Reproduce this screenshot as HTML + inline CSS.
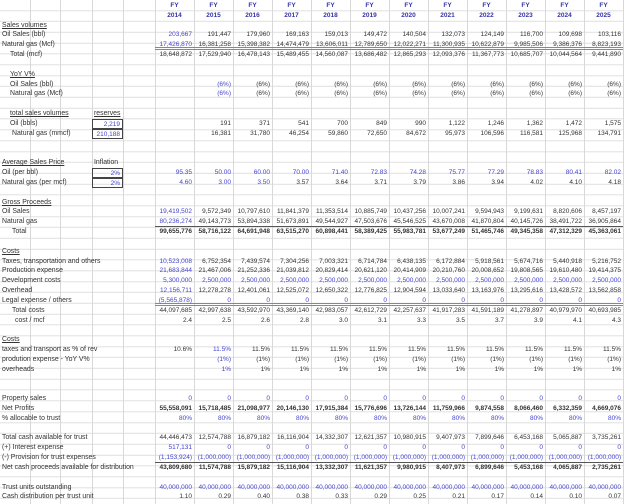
<!DOCTYPE html>
<html><head><meta charset="utf-8"><style>
*{margin:0;padding:0;box-sizing:border-box}
body{width:640px;height:504px;background:#fff;position:relative;overflow:hidden;font-family:"Liberation Sans",sans-serif;font-size:6.5px;color:#333}
#g{position:absolute;left:0;top:0;width:624px;height:504px;
background-image:repeating-linear-gradient(to bottom,transparent 0,transparent 9.84px,#e0e0e0 9.84px,#e0e0e0 10.84px);background-position:0 0.3px}
#gv{position:absolute;left:155px;top:0;width:469px;height:504px;
background-image:linear-gradient(to right,#d8d8d8 1px,transparent 1px);background-size:39px 100%;background-repeat:repeat-x}
.v{position:absolute;top:0;height:504px;width:1px;background:#d8d8d8}
#t{position:absolute;left:0;top:1px;width:640px}
.r{display:flex;height:9.84px;line-height:9.84px;white-space:nowrap}
.l{width:92px;padding-left:2px;overflow:visible;font-size:6.9px}
.m{width:31px;text-align:right;padding-right:2px}
.n{width:32px}
.r i{font-style:normal;width:39px;text-align:right;padding-right:2px}
.b{color:#4444cc}
.h i{text-align:center;font-weight:bold;color:#3535a5;padding-right:0}
.u{text-decoration:underline}
.bo{font-weight:bold}
.d i{border-bottom:3px double #888;}
.s i{border-bottom:1px solid #555}
.x{border:1px solid #444;color:#4444cc}
.ml{text-align:left}
</style></head><body>
<div id="g"></div><div id="gv"></div>
<div class="v" style="left:30px"></div><div class="v" style="left:60px"></div><div class="v" style="left:92px"></div><div class="v" style="left:123px"></div><div class="v" style="left:623px"></div>
<div id="t">
<div class="r h"><span class="l"></span><span class="m"></span><span class="n"></span><i>FY</i><i>FY</i><i>FY</i><i>FY</i><i>FY</i><i>FY</i><i>FY</i><i>FY</i><i>FY</i><i>FY</i><i>FY</i><i>FY</i></div>
<div class="r h"><span class="l"></span><span class="m"></span><span class="n"></span><i>2014</i><i>2015</i><i>2016</i><i>2017</i><i>2018</i><i>2019</i><i>2020</i><i>2021</i><i>2022</i><i>2023</i><i>2024</i><i>2025</i></div>
<div class="r"><span class="l u">Sales volumes</span></div>
<div class="r"><span class="l">Oil Sales (bbl)</span><span class="m"></span><span class="n"></span><i class="b">203,667</i><i>191,447</i><i>179,960</i><i>169,163</i><i>159,013</i><i>149,472</i><i>140,504</i><i>132,073</i><i>124,149</i><i>116,700</i><i>109,698</i><i>103,116</i></div>
<div class="r d"><span class="l">Natural gas (Mcf)</span><span class="m"></span><span class="n"></span><i class="b">17,426,870</i><i>16,381,258</i><i>15,398,382</i><i>14,474,479</i><i>13,606,011</i><i>12,789,650</i><i>12,022,271</i><i>11,300,935</i><i>10,622,879</i><i>9,985,506</i><i>9,386,376</i><i>8,823,193</i></div>
<div class="r"><span class="l" style="padding-left:10px">Total (mcf)</span><span class="m"></span><span class="n"></span><i>18,648,872</i><i>17,529,940</i><i>16,478,143</i><i>15,489,455</i><i>14,560,087</i><i>13,686,482</i><i>12,865,293</i><i>12,093,376</i><i>11,367,773</i><i>10,685,707</i><i>10,044,564</i><i>9,441,890</i></div>
<div class="r"></div>
<div class="r"><span class="l u" style="padding-left:10px">YoY V%</span></div>
<div class="r"><span class="l" style="padding-left:10px">Oil Sales (bbl)</span><span class="m"></span><span class="n"></span><i></i><i class="b">(6%)</i><i>(6%)</i><i>(6%)</i><i>(6%)</i><i>(6%)</i><i>(6%)</i><i>(6%)</i><i>(6%)</i><i>(6%)</i><i>(6%)</i><i>(6%)</i></div>
<div class="r"><span class="l" style="padding-left:10px">Natural gas (Mcf)</span><span class="m"></span><span class="n"></span><i></i><i class="b">(6%)</i><i>(6%)</i><i>(6%)</i><i>(6%)</i><i>(6%)</i><i>(6%)</i><i>(6%)</i><i>(6%)</i><i>(6%)</i><i>(6%)</i><i>(6%)</i></div>
<div class="r"></div>
<div class="r"><span class="l u" style="padding-left:10px">total sales volumes</span><span class="m ml u" style="padding-left:2px;font-size:6.9px">reserves</span></div>
<div class="r"><span class="l" style="padding-left:10px">Oil (bbls)</span><span class="m x">2,219</span><span class="n"></span><i></i><i>191</i><i>371</i><i>541</i><i>700</i><i>849</i><i>990</i><i>1,122</i><i>1,246</i><i>1,362</i><i>1,472</i><i>1,575</i></div>
<div class="r"><span class="l" style="padding-left:12px">Natural gas (mmcf)</span><span class="m x">210,188</span><span class="n"></span><i></i><i>16,381</i><i>31,780</i><i>46,254</i><i>59,860</i><i>72,650</i><i>84,672</i><i>95,973</i><i>106,596</i><i>116,581</i><i>125,968</i><i>134,791</i></div>
<div class="r"></div>
<div class="r"></div>
<div class="r"><span class="l u">Average Sales Price</span><span class="m ml" style="padding-left:2px;font-size:6.9px">Inflation</span></div>
<div class="r"><span class="l">Oil (per bbl)</span><span class="m x">2%</span><span class="n"></span><i class="b">95.35</i><i class="b">50.00</i><i class="b">60.00</i><i class="b">70.00</i><i class="b">71.40</i><i class="b">72.83</i><i class="b">74.28</i><i class="b">75.77</i><i class="b">77.29</i><i class="b">78.83</i><i class="b">80.41</i><i class="b">82.02</i></div>
<div class="r"><span class="l">Natural gas (per mcf)</span><span class="m x">2%</span><span class="n"></span><i class="b">4.60</i><i class="b">3.00</i><i class="b">3.50</i><i>3.57</i><i>3.64</i><i>3.71</i><i>3.79</i><i>3.86</i><i>3.94</i><i>4.02</i><i>4.10</i><i>4.18</i></div>
<div class="r"></div>
<div class="r"><span class="l u">Gross Proceeds</span></div>
<div class="r"><span class="l">Oil Sales</span><span class="m"></span><span class="n"></span><i class="b">19,419,502</i><i>9,572,349</i><i>10,797,610</i><i>11,841,379</i><i>11,353,514</i><i>10,885,749</i><i>10,437,256</i><i>10,007,241</i><i>9,594,943</i><i>9,199,631</i><i>8,820,606</i><i>8,457,197</i></div>
<div class="r s"><span class="l">Natural gas</span><span class="m"></span><span class="n"></span><i class="b">80,236,274</i><i>49,143,773</i><i>53,894,338</i><i>51,673,891</i><i>49,544,927</i><i>47,503,676</i><i>45,546,525</i><i>43,670,008</i><i>41,870,804</i><i>40,145,726</i><i>38,491,722</i><i>36,905,864</i></div>
<div class="r bo"><span class="l" style="padding-left:12px;font-weight:normal">Total</span><span class="m"></span><span class="n"></span><i>99,655,776</i><i>58,716,122</i><i>64,691,948</i><i>63,515,270</i><i>60,898,441</i><i>58,389,425</i><i>55,983,781</i><i>53,677,249</i><i>51,465,746</i><i>49,345,358</i><i>47,312,329</i><i>45,363,061</i></div>
<div class="r"></div>
<div class="r"><span class="l u">Costs</span></div>
<div class="r"><span class="l">Taxes, transportation and others</span><span class="m"></span><span class="n"></span><i class="b">10,523,008</i><i>6,752,354</i><i>7,439,574</i><i>7,304,256</i><i>7,003,321</i><i>6,714,784</i><i>6,438,135</i><i>6,172,884</i><i>5,918,561</i><i>5,674,716</i><i>5,440,918</i><i>5,216,752</i></div>
<div class="r"><span class="l">Production expense</span><span class="m"></span><span class="n"></span><i class="b">21,683,844</i><i>21,467,006</i><i>21,252,336</i><i>21,039,812</i><i>20,829,414</i><i>20,621,120</i><i>20,414,909</i><i>20,210,760</i><i>20,008,652</i><i>19,808,565</i><i>19,610,480</i><i>19,414,375</i></div>
<div class="r"><span class="l">Development costs</span><span class="m"></span><span class="n"></span><i class="b">5,300,000</i><i class="b">2,500,000</i><i class="b">2,500,000</i><i class="b">2,500,000</i><i class="b">2,500,000</i><i class="b">2,500,000</i><i class="b">2,500,000</i><i class="b">2,500,000</i><i class="b">2,500,000</i><i class="b">2,500,000</i><i class="b">2,500,000</i><i class="b">2,500,000</i></div>
<div class="r"><span class="l">Overhead</span><span class="m"></span><span class="n"></span><i class="b">12,156,711</i><i>12,278,278</i><i>12,401,061</i><i>12,525,072</i><i>12,650,322</i><i>12,776,825</i><i>12,904,594</i><i>13,033,640</i><i>13,163,976</i><i>13,295,616</i><i>13,428,572</i><i>13,562,858</i></div>
<div class="r d"><span class="l">Legal expense / others</span><span class="m"></span><span class="n"></span><i class="b">(5,565,878)</i><i class="b">0</i><i class="b">0</i><i class="b">0</i><i class="b">0</i><i class="b">0</i><i class="b">0</i><i class="b">0</i><i class="b">0</i><i class="b">0</i><i class="b">0</i><i class="b">0</i></div>
<div class="r"><span class="l" style="padding-left:12px">Total costs</span><span class="m"></span><span class="n"></span><i>44,097,685</i><i>42,997,638</i><i>43,592,970</i><i>43,369,140</i><i>42,983,057</i><i>42,612,729</i><i>42,257,637</i><i>41,917,283</i><i>41,591,189</i><i>41,278,897</i><i>40,979,970</i><i>40,693,985</i></div>
<div class="r"><span class="l" style="padding-left:15px">cost / mcf</span><span class="m"></span><span class="n"></span><i>2.4</i><i>2.5</i><i>2.6</i><i>2.8</i><i>3.0</i><i>3.1</i><i>3.3</i><i>3.5</i><i>3.7</i><i>3.9</i><i>4.1</i><i>4.3</i></div>
<div class="r"></div>
<div class="r"><span class="l u">Costs</span></div>
<div class="r"><span class="l">taxes and transport as % of rev</span><span class="m"></span><span class="n"></span><i>10.6%</i><i class="b">11.5%</i><i>11.5%</i><i>11.5%</i><i>11.5%</i><i>11.5%</i><i>11.5%</i><i>11.5%</i><i>11.5%</i><i>11.5%</i><i>11.5%</i><i>11.5%</i></div>
<div class="r"><span class="l">prodution expense - YoY V%</span><span class="m"></span><span class="n"></span><i></i><i class="b">(1%)</i><i>(1%)</i><i>(1%)</i><i>(1%)</i><i>(1%)</i><i>(1%)</i><i>(1%)</i><i>(1%)</i><i>(1%)</i><i>(1%)</i><i>(1%)</i></div>
<div class="r"><span class="l">overheads</span><span class="m"></span><span class="n"></span><i></i><i class="b">1%</i><i>1%</i><i>1%</i><i>1%</i><i>1%</i><i>1%</i><i>1%</i><i>1%</i><i>1%</i><i>1%</i><i>1%</i></div>
<div class="r"></div>
<div class="r"></div>
<div class="r"><span class="l">Property sales</span><span class="m"></span><span class="n"></span><i class="b">0</i><i class="b">0</i><i class="b">0</i><i class="b">0</i><i class="b">0</i><i class="b">0</i><i class="b">0</i><i class="b">0</i><i class="b">0</i><i class="b">0</i><i class="b">0</i><i class="b">0</i></div>
<div class="r bo"><span class="l" style="font-weight:normal">Net Profits</span><span class="m"></span><span class="n"></span><i>55,558,091</i><i>15,718,485</i><i>21,098,977</i><i>20,146,130</i><i>17,915,384</i><i>15,776,696</i><i>13,726,144</i><i>11,759,966</i><i>9,874,558</i><i>8,066,460</i><i>6,332,359</i><i>4,669,076</i></div>
<div class="r"><span class="l">% allocable to trust</span><span class="m"></span><span class="n"></span><i class="b">80%</i><i class="b">80%</i><i class="b">80%</i><i class="b">80%</i><i class="b">80%</i><i class="b">80%</i><i class="b">80%</i><i class="b">80%</i><i class="b">80%</i><i class="b">80%</i><i class="b">80%</i><i class="b">80%</i></div>
<div class="r"></div>
<div class="r"><span class="l">Total cash available for trust</span><span class="m"></span><span class="n"></span><i>44,446,473</i><i>12,574,788</i><i>16,879,182</i><i>16,116,904</i><i>14,332,307</i><i>12,621,357</i><i>10,980,915</i><i>9,407,973</i><i>7,899,646</i><i>6,453,168</i><i>5,065,887</i><i>3,735,261</i></div>
<div class="r"><span class="l">(+) Interest expense</span><span class="m"></span><span class="n"></span><i class="b">517,131</i><i class="b">0</i><i class="b">0</i><i class="b">0</i><i class="b">0</i><i class="b">0</i><i class="b">0</i><i class="b">0</i><i class="b">0</i><i class="b">0</i><i class="b">0</i><i class="b">0</i></div>
<div class="r s"><span class="l">(-) Provision for trust expenses</span><span class="m"></span><span class="n"></span><i class="b">(1,153,924)</i><i class="b">(1,000,000)</i><i class="b">(1,000,000)</i><i class="b">(1,000,000)</i><i class="b">(1,000,000)</i><i class="b">(1,000,000)</i><i class="b">(1,000,000)</i><i class="b">(1,000,000)</i><i class="b">(1,000,000)</i><i class="b">(1,000,000)</i><i class="b">(1,000,000)</i><i class="b">(1,000,000)</i></div>
<div class="r bo"><span class="l" style="font-weight:normal">Net cash proceeds available for distribution</span><span class="m"></span><span class="n"></span><i>43,809,680</i><i>11,574,788</i><i>15,879,182</i><i>15,116,904</i><i>13,332,307</i><i>11,621,357</i><i>9,980,915</i><i>8,407,973</i><i>6,899,646</i><i>5,453,168</i><i>4,065,887</i><i>2,735,261</i></div>
<div class="r"></div>
<div class="r"><span class="l">Trust units outstanding</span><span class="m"></span><span class="n"></span><i class="b">40,000,000</i><i class="b">40,000,000</i><i class="b">40,000,000</i><i class="b">40,000,000</i><i class="b">40,000,000</i><i class="b">40,000,000</i><i class="b">40,000,000</i><i class="b">40,000,000</i><i class="b">40,000,000</i><i class="b">40,000,000</i><i class="b">40,000,000</i><i class="b">40,000,000</i></div>
<div class="r"><span class="l">Cash distribution per trust unit</span><span class="m"></span><span class="n"></span><i>1.10</i><i>0.29</i><i>0.40</i><i>0.38</i><i>0.33</i><i>0.29</i><i>0.25</i><i>0.21</i><i>0.17</i><i>0.14</i><i>0.10</i><i>0.07</i></div>
</div>
</body></html>
